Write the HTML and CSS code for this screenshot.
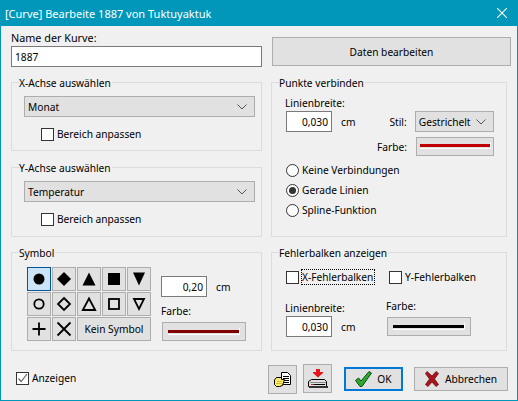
FILE: index.html
```html
<!DOCTYPE html>
<html lang="de">
<head>
    <meta charset="UTF-8">
    <title>[Curve] Bearbeite 1887 von Tuktuyaktuk</title>
    <link rel="stylesheet" href="styles.css">
</head>
<body>
    <div class="window">
        <header class="titlebar">
            <span class="title">[Curve] Bearbeite 1887 von Tuktuyaktuk</span>
            <svg class="close" width="10" height="10" viewBox="0 0 10 10"><path d="M0 0L10 10M10 0L0 10" stroke="#fff" stroke-width="1.1"/></svg>
        </header>

        <main class="dialog">
            <div class="name-block">
                <label class="name-label" for="name">Name der Kurve:</label>
                <input class="field name-field" id="name" type="text" value="1887">
            </div>
            <div class="data-block">
                <button class="btn data-btn" type="button">Daten bearbeiten</button>
            </div>

            <section class="group group-x">
                <h2 class="group-title">X-Achse auswählen</h2>
                <div class="combo axis-combo">
                    <span>Monat</span>
                    <svg width="10" height="6" viewBox="0 0 10 6"><path d="M0.5 0.5L5 5L9.5 0.5" fill="none" stroke="#555"/></svg>
                </div>
                <label class="check range-check"><span class="box"></span>Bereich anpassen</label>
            </section>

            <section class="group group-connect">
                <h2 class="group-title">Punkte verbinden</h2>
                <div class="small-label width-label">Linienbreite:</div>
                <div class="connect-row">
                    <input class="field num-field" type="text" value="0,030">
                    <span class="unit">cm</span>
                    <span class="style-label">Stil:</span>
                    <div class="combo style-combo">
                        <span>Gestrichelt</span>
                        <svg width="10" height="6" viewBox="0 0 10 6"><path d="M0.5 0.5L5 5L9.5 0.5" fill="none" stroke="#555"/></svg>
                    </div>
                </div>
                <div class="color-row">
                    <span class="color-label">Farbe:</span>
                    <button class="btn color-btn color-btn-small" type="button">
                        <svg width="71" height="7" viewBox="0 0 71 7"><path d="M70.5 0V5.5H0" fill="none" stroke="#fff"/><rect y="1" width="70" height="3" fill="#c00000"/></svg>
                    </button>
                </div>
                <div class="radios">
                    <label class="check"><span class="radio"></span>Keine Verbindungen</label>
                    <label class="check"><span class="radio radio-on"></span>Gerade Linien</label>
                    <label class="check"><span class="radio"></span>Spline-Funktion</label>
                </div>
            </section>

            <section class="group group-y">
                <h2 class="group-title">Y-Achse auswählen</h2>
                <div class="combo axis-combo">
                    <span>Temperatur</span>
                    <svg width="10" height="6" viewBox="0 0 10 6"><path d="M0.5 0.5L5 5L9.5 0.5" fill="none" stroke="#555"/></svg>
                </div>
                <label class="check range-check"><span class="box"></span>Bereich anpassen</label>
            </section>

            <section class="group group-symbol">
                <h2 class="group-title">Symbol</h2>
                <div class="symbol-wrap">
                    <div class="symbols">
                        <button class="sym sym-on" type="button"><svg width="14" height="14" viewBox="0 0 14 14"><circle cx="7" cy="7" r="5.5"/></svg></button>
                        <button class="sym" type="button"><svg width="16" height="16" viewBox="0 0 16 16"><path d="M8 1L15 8L8 15L1 8Z"/></svg></button>
                        <button class="sym" type="button"><svg width="14" height="14" viewBox="0 0 14 14"><path d="M7 0.5L13.5 13.5H0.5Z"/></svg></button>
                        <button class="sym" type="button"><svg width="14" height="14" viewBox="0 0 14 14"><rect x="1" y="1" width="12" height="12"/></svg></button>
                        <button class="sym" type="button"><svg width="14" height="14" viewBox="0 0 14 14"><path d="M1 0.5H13L7 13.5Z"/></svg></button>
                        <button class="sym" type="button"><svg class="hollow" width="14" height="14" viewBox="0 0 14 14"><circle cx="7" cy="7" r="4.7"/></svg></button>
                        <button class="sym" type="button"><svg class="hollow" width="16" height="16" viewBox="0 0 16 16"><path d="M8 2L14 8L8 14L2 8Z"/></svg></button>
                        <button class="sym" type="button"><svg class="hollow" width="16" height="16" viewBox="0 0 16 16"><path d="M8 2.5L14.2 14H1.8Z"/></svg></button>
                        <button class="sym" type="button"><svg class="hollow" width="14" height="14" viewBox="0 0 14 14"><rect x="2" y="2" width="10" height="10"/></svg></button>
                        <button class="sym" type="button"><svg class="hollow" width="14" height="14" viewBox="0 0 14 14"><path d="M2 2H12L7 12Z"/></svg></button>
                        <button class="sym" type="button"><svg class="hollow" width="16" height="16" viewBox="0 0 16 16"><path d="M8 1.5V14.5M1.5 8H14.5"/></svg></button>
                        <button class="sym" type="button"><svg class="hollow" width="16" height="16" viewBox="0 0 16 16"><path d="M1.5 1.5L14.5 14.5M14.5 1.5L1.5 14.5"/></svg></button>
                        <button class="sym sym-none" type="button">Kein Symbol</button>
                    </div>
                    <div class="symbol-side">
                        <div class="size-row">
                            <input class="field num-field" type="text" value="0,20">
                            <span class="unit">cm</span>
                        </div>
                        <div class="small-label symbol-color-label">Farbe:</div>
                        <button class="btn color-btn" type="button">
                            <svg width="72" height="8" viewBox="0 0 72 8"><path d="M71.5 0V6.5H0" fill="none" stroke="#fff"/><rect y="2" width="71" height="3" fill="#800000"/></svg>
                        </button>
                    </div>
                </div>
            </section>

            <section class="group group-error">
                <h2 class="group-title">Fehlerbalken anzeigen</h2>
                <div class="error-checks">
                    <label class="check"><span class="box"></span><span class="focused">X-Fehlerbalken</span></label>
                    <label class="check"><span class="box"></span>Y-Fehlerbalken</label>
                </div>
                <div class="error-row">
                    <div>
                        <div class="small-label">Linienbreite:</div>
                        <div class="size-row">
                            <input class="field num-field" type="text" value="0,030">
                            <span class="unit">cm</span>
                        </div>
                    </div>
                    <div class="error-color">
                        <div class="small-label error-color-label">Farbe:</div>
                        <button class="btn color-btn" type="button">
                            <svg width="72" height="8" viewBox="0 0 72 8"><path d="M71.5 0V6.5H0" fill="none" stroke="#fff"/><rect y="2" width="71" height="3" fill="#000"/></svg>
                        </button>
                    </div>
                </div>
            </section>
        </main>

        <footer class="footer">
            <label class="check show-check">
                <span class="box"><svg width="11" height="11" viewBox="0 0 11 11"><path d="M1.5 5.5L4.2 8.5L10 1" fill="none" stroke="#666" stroke-width="1.2"/></svg></span>Anzeigen
            </label>
            <button class="btn icon-btn open-btn" type="button">
                <svg width="17" height="15" viewBox="0 0 17 15">
                    <path d="M7.5 0.5H13.5L16.5 3.5V12.5H7.5Z" fill="#fff" stroke="#000"/>
                    <path d="M9 4.5H15M9 6.5H15M9 8.5H15M10 10.5H15" stroke="#000"/>
                    <path d="M2.5 5.5H7.5V7.5H10.5L8.5 13.5L5.5 14.5H2.5L0.5 12.5V8Z" fill="#ffee66" stroke="#000"/>
                    <path d="M3 9.5H8M2 11.5H8" stroke="#d0b840"/>
                </svg>
            </button>
            <button class="btn icon-btn save-btn" type="button">
                <svg width="20" height="19" viewBox="0 0 20 19">
                    <path d="M8 0H12V3H15V4L10 8.5L5 4V3H8Z" fill="#e8141c"/>
                    <path d="M3.5 10.5H16.5L18.5 12.5V17.5H0.5V12.5Z" fill="#e0e0e0" stroke="#000"/>
                    <path d="M2 13.5H18" stroke="#888"/>
                    <path d="M6 15.5H17" stroke="#000"/>
                    <rect x="3" y="15" width="3" height="1" fill="#e8141c"/>
                    <rect x="1" y="17" width="19" height="2" fill="#333"/>
                </svg>
            </button>
            <button class="btn ok-btn" type="button">
                <svg width="17" height="16" viewBox="0 0 17 16"><path d="M0.5 9.5L3.5 7L6 10L14 0.5L16.5 2L7 15.5H5Z" fill="#2ea82a" stroke="#0a4a14"/></svg>
                OK
            </button>
            <button class="btn cancel-btn" type="button">
                <svg width="14" height="16" viewBox="0 0 14 16"><path d="M2 0.5L7 5L11 0.5L13.5 2.5L9.5 8L13.5 13.5L11 15.5L7 11L3 15.5L0.5 13.5L4.5 8L0.5 2.5Z" fill="#a8141c" stroke="#6a1016" stroke-width="0.8"/></svg>
                Abbrechen
            </button>
        </footer>
    </div>
</body>
</html>
```

FILE: styles.css
```css
* {
    margin: 0;
    padding: 0;
    box-sizing: border-box;
}

body {
    width: 518px;
    height: 401px;
    overflow: hidden;
    font-family: "Noto Sans", Arial, sans-serif;
    font-size: 10.2px;
    color: #000;
    background-color: #f0f0f0;
}

button, input {
    font-family: inherit;
    font-size: inherit;
    color: inherit;
}

/* Window frame */
.window {
    width: 518px;
    height: 401px;
    border: 1px solid #0097bb;
    border-top: none;
    display: flex;
    flex-direction: column;
}

.titlebar {
    height: 26px;
    margin: 0 -1px;
    padding: 0 11px 0 5px;
    background-color: #0097bb;
    color: #fff;
    font-size: 11px;
    display: flex;
    align-items: center;
    justify-content: space-between;
}

/* Main grid */
.dialog {
    display: grid;
    grid-template-columns: 251px 236px;
    grid-template-rows: 56px 85px 85px 99px;
    column-gap: 9px;
    padding-left: 10px;
}

.name-block {
    padding-top: 3px;
}

.name-label {
    display: block;
    height: 17px;
    line-height: 17px;
    font-size: 10.8px;
}

.data-block {
    padding-top: 11px;
    padding-left: 1px;
}

.data-btn {
    width: 239px;
    height: 29px;
}

.field {
    border: 1px solid #7a7a7a;
    background-color: #fff;
    outline: none;
    height: 21px;
    padding: 0 3px;
}

.name-field {
    width: 251px;
}

.num-field {
    width: 46px;
    text-align: right;
}

.btn {
    background-color: #e1e1e1;
    border: 1px solid #adadad;
    display: flex;
    align-items: center;
    justify-content: center;
}

/* Group boxes */
.group {
    border: 1px solid #dcdcdc;
    padding: 0 12px;
}

.group-title {
    font-size: 10.2px;
    font-weight: normal;
    line-height: 16px;
    height: 16px;
    width: fit-content;
    margin: -8px 0 0 -5px;
    background-color: #f0f0f0;
    padding-right: 1px;
}

.group-x {
    height: 69px;
    grid-column: 1;
    grid-row: 2;
}

.group-y {
    height: 70px;
    grid-column: 1;
    grid-row: 3;
}

.group-connect {
    height: 155px;
    grid-column: 2;
    grid-row: 2 / 4;
}

.group-symbol {
    height: 99px;
    grid-column: 1;
    grid-row: 4;
}

.group-error {
    height: 99px;
    grid-column: 2;
    grid-row: 4;
}

/* Combo boxes */
.combo {
    height: 21px;
    border: 1px solid #adadad;
    background-color: #e1e1e1;
    display: flex;
    align-items: center;
    justify-content: space-between;
    padding: 0 7px 0 3px;
}

.axis-combo {
    width: 231px;
    margin-top: 5px;
}

.style-combo {
    width: 81px;
}

/* Checks and radios */
.check {
    display: flex;
    align-items: center;
    height: 16px;
    line-height: 16px;
    white-space: nowrap;
}

.box {
    width: 13px;
    height: 13px;
    border: 1px solid #333;
    background-color: #fff;
    margin-right: 3px;
    display: flex;
    align-items: center;
    justify-content: center;
}

.radio {
    width: 13px;
    height: 13px;
    border: 1px solid #333;
    border-radius: 50%;
    background-color: #fff;
    margin-right: 3px;
    display: flex;
    align-items: center;
    justify-content: center;
}

.radio-on::after {
    content: "";
    width: 7px;
    height: 7px;
    border-radius: 50%;
    background-color: #333;
}

.range-check {
    margin: 9px 0 0 17px;
}

/* Punkte verbinden */
.small-label {
    height: 16px;
    line-height: 16px;
}

.width-label {
    margin-top: 4px;
    margin-left: 1px;
}

.connect-row {
    display: flex;
    align-items: center;
    margin-left: 2px;
}

.unit {
    margin-left: 9px;
    width: 24px;
}

.style-label {
    margin-left: 25px;
    width: 26px;
}

.color-row {
    display: flex;
    align-items: center;
    margin-top: 5px;
    margin-left: 93px;
}

.color-label {
    width: 40px;
}

.color-btn {
    width: 84px;
    height: 19px;
}

.color-btn-small {
    width: 79px;
}

.radios {
    margin: 6px 0 0 2px;
    display: flex;
    flex-direction: column;
    gap: 4px;
}

/* Symbol panel */
.symbol-wrap {
    display: flex;
    margin-top: 6px;
    margin-left: 3px;
}

.symbols {
    display: grid;
    grid-template-columns: repeat(5, 24px);
    grid-auto-rows: 24px;
    gap: 1px;
}

.sym {
    background-color: #e1e1e1;
    border: 1px solid #adadad;
    display: flex;
    align-items: center;
    justify-content: center;
}

.sym-on {
    background-color: #cce4f7;
    border-color: #005499;
}

.sym-none {
    grid-column: 3 / 6;
}

.hollow {
    fill: none;
    stroke: #000;
    stroke-width: 1.8;
}

.symbol-side {
    margin-left: 10px;
    padding-top: 9px;
}

.size-row {
    display: flex;
    align-items: center;
}

.symbol-color-label {
    margin-top: 6px;
}

.symbol-side .color-btn {
    margin-top: 3px;
    margin-left: 1px;
}

/* Fehlerbalken panel */
.error-checks {
    display: grid;
    grid-template-columns: 103px auto;
    margin: 8px 0 0 2px;
}

.focused {
    outline: 1px dotted #000;
    line-height: 14px;
    padding-right: 1px;
}

.error-row {
    display: flex;
    margin: 15px 0 0 1px;
}

.error-row .size-row {
    margin-left: 1px;
}

.error-color {
    margin-left: 21px;
}

.error-color-label {
    margin-top: -2px;
    margin-bottom: 3px;
}

.error-color .color-btn {
    margin-left: 1px;
}

/* Bottom row */
.footer {
    display: flex;
    align-items: flex-start;
    padding: 13px 0 0 15px;
}

.show-check {
    margin-top: 6px;
    width: 252px;
}

.icon-btn {
    width: 29px;
    height: 29px;
}

.open-btn {
    margin-top: 1px;
}

.save-btn {
    margin-left: 6px;
}

.ok-btn {
    width: 59px;
    height: 24px;
    margin: 3px 0 0 12px;
    border: 2px solid #0078d7;
    gap: 5px;
}

.cancel-btn {
    width: 94px;
    height: 24px;
    margin: 3px 0 0 11px;
    gap: 6px;
}
```
